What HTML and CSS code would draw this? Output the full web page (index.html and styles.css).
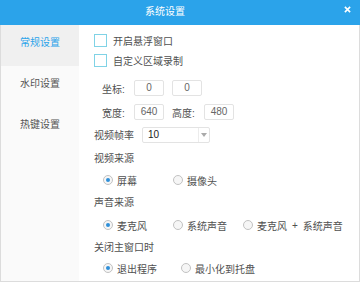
FILE: index.html
```html
<!DOCTYPE html>
<html lang="zh-CN">
<head>
    <meta charset="UTF-8">
    <title>系统设置</title>
    <link rel="stylesheet" href="styles.css">
</head>
<body>
    <div class="window">
        <div class="titlebar">
            <span class="title">系统设置</span>
            <span class="close"><svg viewBox="0 0 8 8"><path d="M1 1L7 7M7 1L1 7"></path></svg></span>
        </div>
        <div class="main">
            <ul class="sidebar">
                <li class="active">常规设置</li>
                <li>水印设置</li>
                <li>热键设置</li>
            </ul>
            <div class="content">
                <div class="row check-row"><span class="checkbox"></span>开启悬浮窗口</div>
                <div class="row check-row"><span class="checkbox"></span>自定义区域录制</div>
                <div class="row field-row coord-row">
                    <span class="field-label">坐标:</span><span class="num-box">0</span>
                    <span class="num-box">0</span>
                </div>
                <div class="row field-row size-row">
                    <span class="field-label">宽度:</span><span class="num-box">640</span>
                    <span class="field-label">高度:</span><span class="num-box">480</span>
                </div>
                <div class="row fps-row">
                    <span class="fps-label">视频帧率</span>
                    <div class="select"><span class="select-value">10</span><span class="select-arrow"></span></div>
                </div>
                <div class="row group-label video-label">视频来源</div>
                <div class="row radio-row video-radios">
                    <span class="radio-opt"><span class="radio checked"></span>屏幕</span>
                    <span class="radio-opt"><span class="radio"></span>摄像头</span>
                </div>
                <div class="row group-label">声音来源</div>
                <div class="row radio-row sound-radios">
                    <span class="radio-opt"><span class="radio checked"></span>麦克风</span>
                    <span class="radio-opt"><span class="radio"></span>系统声音</span>
                    <span class="radio-opt"><span class="radio"></span>麦克风<span class="plus">+</span>系统声音</span>
                </div>
                <div class="row group-label">关闭主窗口时</div>
                <div class="row radio-row close-radios">
                    <span class="radio-opt"><span class="radio checked"></span>退出程序</span>
                    <span class="radio-opt"><span class="radio"></span>最小化到托盘</span>
                </div>
            </div>
        </div>
    </div>
</body>
</html>
```

FILE: styles.css
```css
:root {
    --blue: #2ba3ea;
    --text: #505050;
    --line: #e3e3e3;
}

* { box-sizing: border-box; }

body {
    margin: 0;
    background: #fff;
    font-family: "Liberation Sans", "Noto Sans CJK SC", sans-serif;
    font-size: 10px;
    color: var(--text);
}

.window {
    width: 360px;
    height: 282px;
    display: flex;
    flex-direction: column;
    border: 1px solid #dcdcdc;
    border-top: none;
}

.titlebar {
    height: 25px;
    margin: 0 -1px;
    background: var(--blue);
    display: flex;
    color: #fff;
}
.titlebar .title { flex: 1; text-align: center; line-height: 24px; font-size: 10px; }
.titlebar .close { width: 30px; padding: 6px 0 0 14px; }
.titlebar .close svg { display: block; width: 7px; height: 7px; stroke: #fff; stroke-width: 1.8; fill: none; }

.main { flex: 1; display: flex; }

.sidebar {
    width: 78px;
    margin: 0;
    padding: 0;
    list-style: none;
    background: #fafafa;
}
.sidebar li {
    height: 41px;
    padding-top: 11px;
    line-height: 14px;
    text-align: center;
    color: #555;
}
.sidebar li.active { background: #f0f0f0; color: var(--blue); }

.content { flex: 1; padding: 5px 0 0 15px; }

.row { display: flex; align-items: center; height: 16px; }

.check-row { height: 20px; }
.checkbox {
    width: 13px;
    height: 13px;
    margin-right: 6px;
    border: 1px solid #80d3e6;
    background: #fff;
}

.field-row { height: 18px; padding-left: 8px; }
.coord-row { margin-top: 9px; }
.size-row { margin-top: 6px; }
.field-label { width: 32px; }
.num-box {
    width: 30px;
    height: 16px;
    margin-right: 8px;
    border: 1px solid var(--line);
    border-radius: 2px;
    text-align: center;
    line-height: 14px;
    color: #666;
}

.fps-row { height: 17px; margin-top: 5px; }
.fps-label { width: 48px; }
.select {
    width: 68px;
    height: 16px;
    display: flex;
    border: 1px solid var(--line);
    border-radius: 2px;
}
.select-value { flex: 1; padding-left: 5px; line-height: 14px; color: #222; }
.select-arrow {
    width: 11px;
    border-left: 1px solid #ececec;
    display: flex;
    align-items: center;
    justify-content: center;
}
.select-arrow::after {
    content: "";
    border-left: 3px solid transparent;
    border-right: 3px solid transparent;
    border-top: 4px solid #aaa;
}

.group-label { margin-top: 5px; }
.video-label { margin-top: 6px; }

.radio-row { padding-left: 9px; }
.video-radios { margin-top: 7px; }
.sound-radios { margin-top: 8px; }
.close-radios { margin-top: 6px; }

.radio-opt { display: flex; align-items: center; width: 70px; flex-shrink: 0; white-space: nowrap; }
.radio-opt:last-child { width: auto; }
.close-radios .radio-opt { width: 78px; }
.plus { margin: 0 5px; }
.radio {
    flex-shrink: 0;
    width: 10px;
    height: 10px;
    margin-right: 4px;
    border: 1px solid #c2c2c2;
    border-radius: 50%;
    background: #f6f6f6;
    display: flex;
    align-items: center;
    justify-content: center;
}
.radio.checked::after {
    content: "";
    width: 4px;
    height: 4px;
    border-radius: 50%;
    background: #2f8fd8;
}
```
